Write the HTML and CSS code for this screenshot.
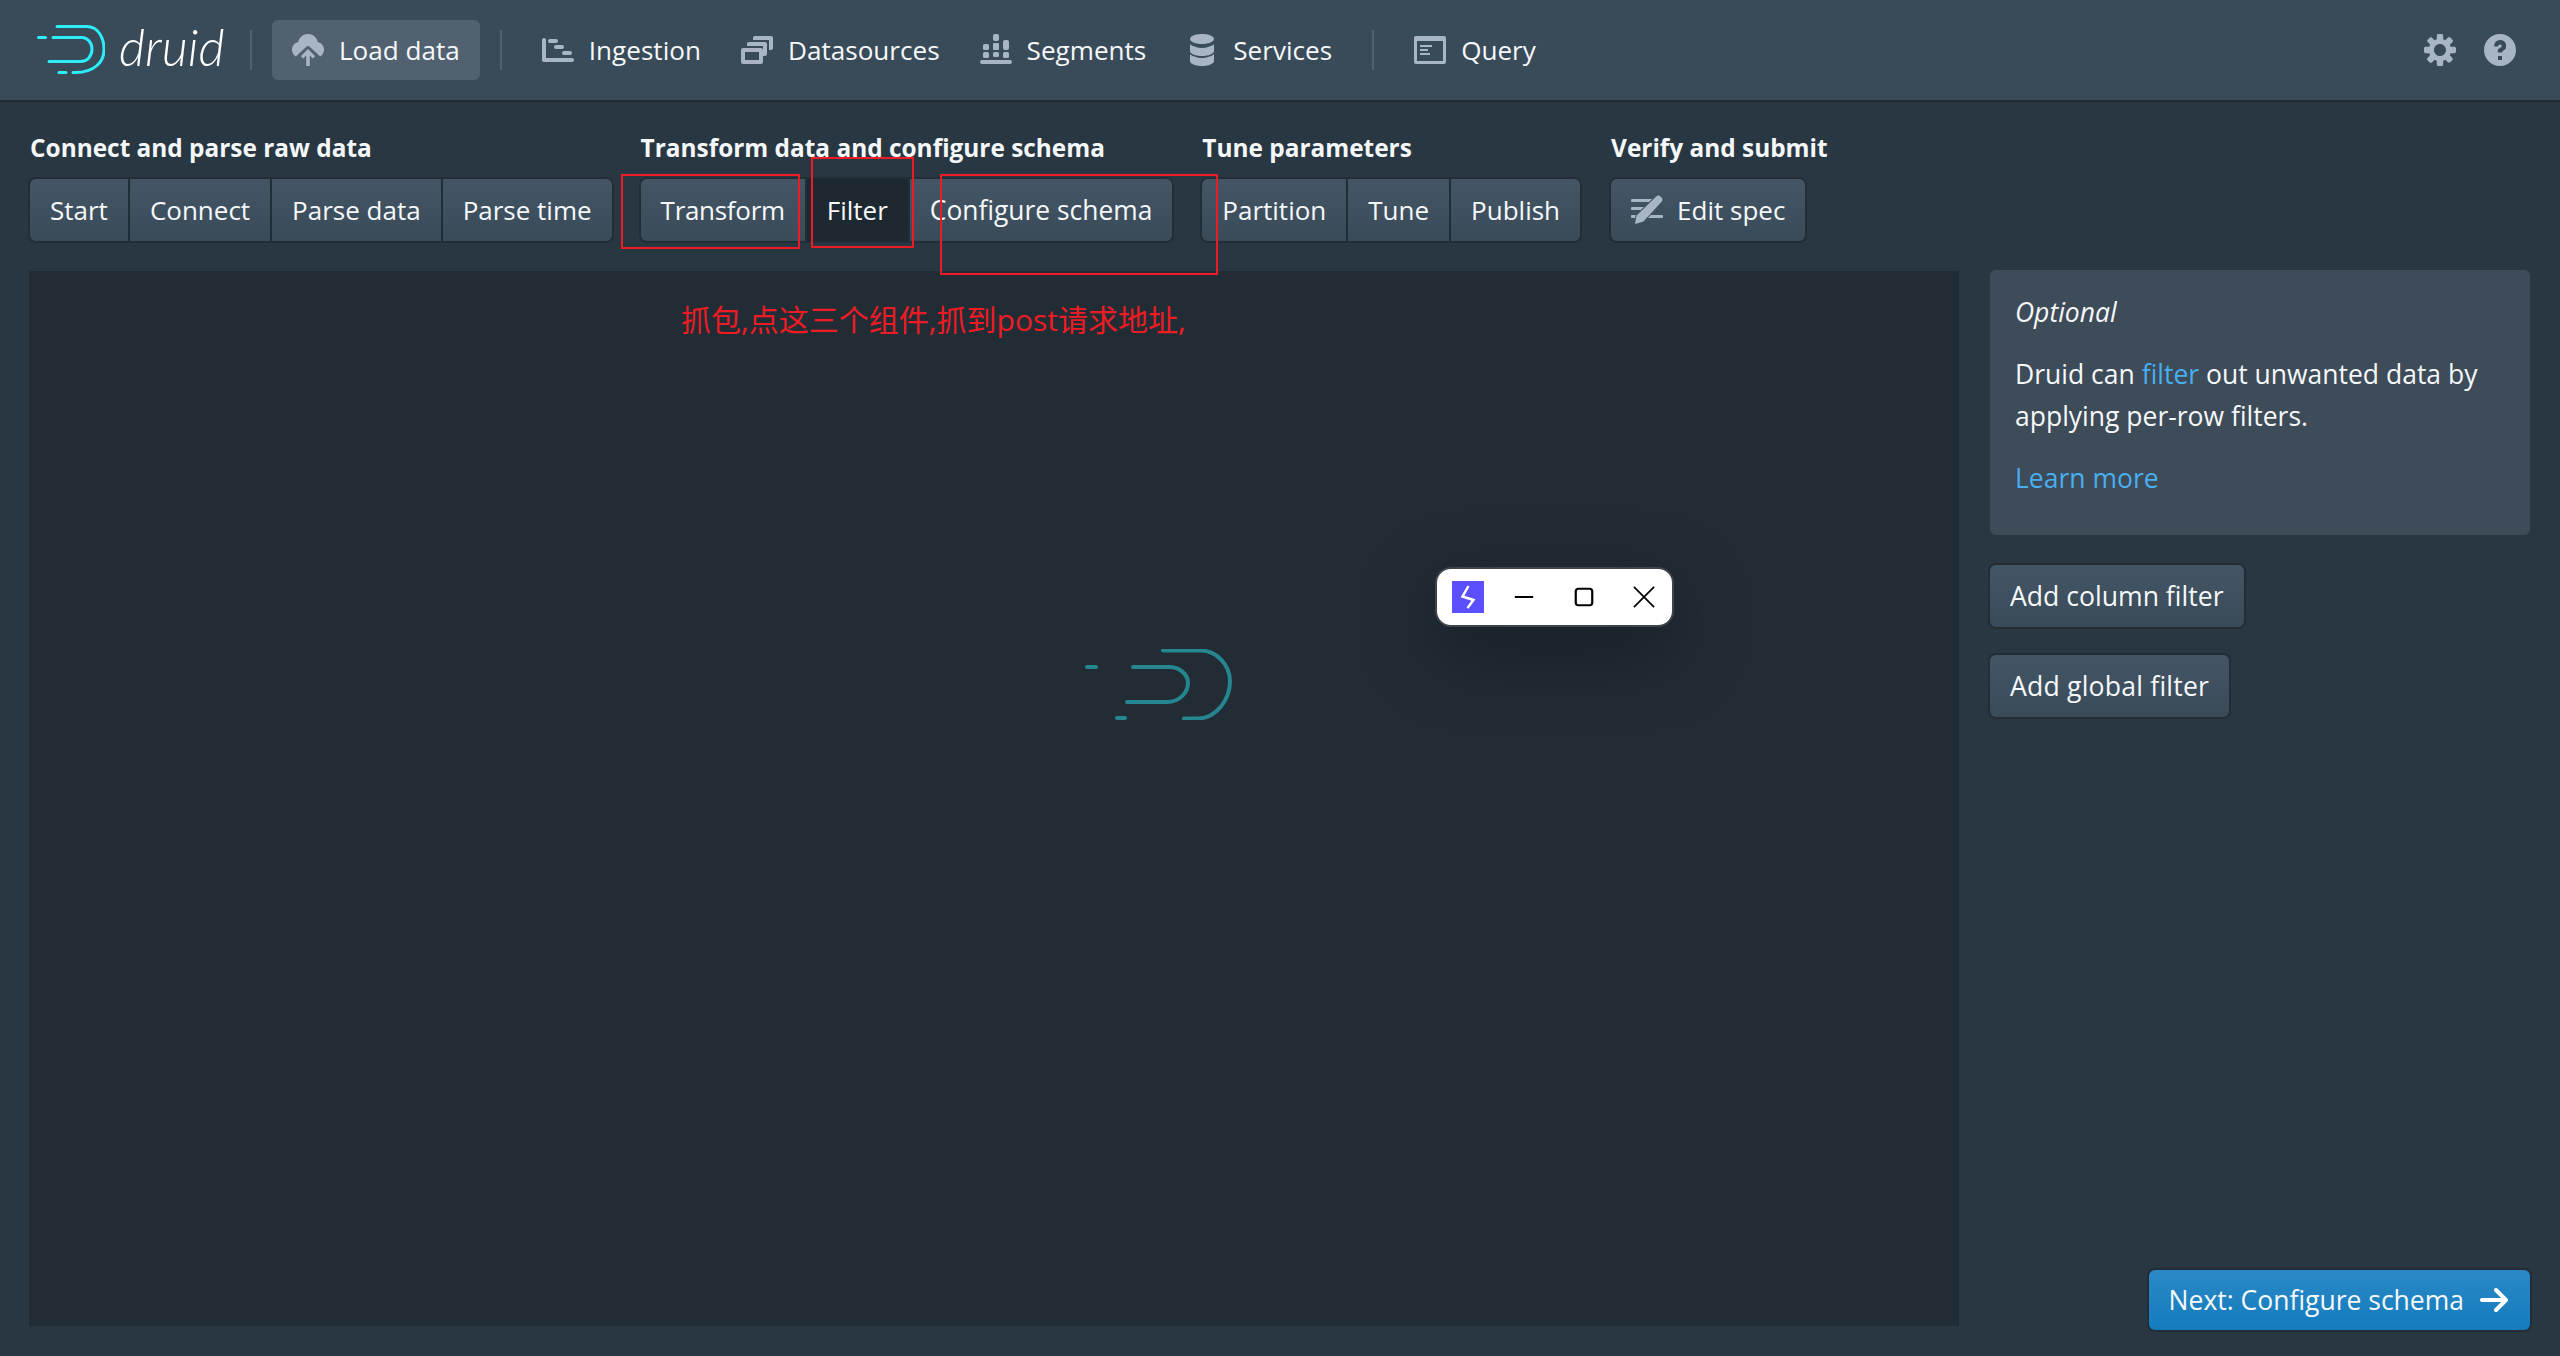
FILE: index.html

```html
<!DOCTYPE html>
<html lang="en">
<head>
  <meta charset="UTF-8" />
  <title>Apache Druid</title>
  <link rel="stylesheet" href="styles.css">
</head>
<body>
  <header class="navbar">
    <a class="brand">
      <svg class="brand-mark" viewBox="0 0 68 50" fill="none" stroke="#2ceefb" stroke-width="3" stroke-linecap="round">
        <path d="M1.5 12.5h7"/>
        <path d="M16 12.5h29c5 0 10 5 10 11.5s-4 12.500-12 12.500H12"/>
        <path d="M20 1.500h30c11 0 17 11 17 23s-9 23-29 23h-2"/>
        <path d="M22 47.500h7"/>
      </svg>
      <span class="brand-name">druid</span>
    </a>
    <span class="nav-divider"></span>
    <a class="nav-btn active">
      <svg class="icon" viewBox="0 0 16 16"><path d="M8 0C5.600 0 3.600 1.700 3.100 4 1.300 4.400 0 6 0 7.900c0 1.400.8 2.700 1.900 3.400l5.400-5c.4-.4 1-.4 1.400 0l5.400 5C15.200 10.600 16 9.300 16 7.900c0-1.900-1.300-3.500-3.100-3.900C12.400 1.700 10.400 0 8 0z"/><path d="M8 7.500l-3.600 3.600 1.200 1.200 1.500-1.500V16h1.800v-5.200l1.500 1.500 1.200-1.200z"/></svg>
      Load data
    </a>
    <span class="nav-divider"></span>
    <a class="nav-btn">
      <svg class="icon" viewBox="0 0 16 16"><path d="M0 3c0-.5.4-1 1-1s1 .5 1 1v9h13c.6 0 1 .4 1 1s-.4 1-1 1H1c-.6 0-1-.4-1-1z"/><rect x="3" y="2.500" width="5" height="2" rx="1"/><rect x="6" y="5.500" width="5" height="2" rx="1"/><rect x="10" y="8.500" width="5" height="2" rx="1"/></svg>
      Ingestion
    </a>
    <a class="nav-btn">
      <svg class="icon" viewBox="0 0 16 16"><path fill-rule="evenodd" d="M12 3.980H4c-.55 0-1 .45-1 1v1h8v5h1c.55 0 1-.45 1-1v-5c0-.55-.45-1-1-1zm3-3H7c-.55 0-1 .45-1 1v1h8v5h1c.55 0 1-.45 1-1v-5c0-.55-.45-1-1-1zm-5 6H1c-.55 0-1 .45-1 1v6c0 .55.45 1 1 1h9c.55 0 1-.45 1-1v-6c0-.55-.45-1-1-1zm-1 6H2v-4h7v4z"/></svg>
      Datasources
    </a>
    <a class="nav-btn">
      <svg class="icon" viewBox="0 0 16 16"><rect x="6.500" y="0" width="3" height="3.500" rx="1"/><rect x="1.500" y="5" width="3" height="3" rx=".8"/><rect x="6.500" y="4.500" width="3" height="3.500" rx=".5"/><rect x="11.500" y="3" width="3" height="5" rx="1"/><rect x="1.500" y="9" width="3" height="3" rx=".8"/><rect x="6.500" y="9" width="3" height="2.500" rx=".8"/><rect x="11.500" y="9" width="3" height="3" rx=".8"/><rect x="0" y="13" width="16" height="2" rx="1"/></svg>
      Segments
    </a>
    <a class="nav-btn">
      <svg class="icon" viewBox="0 0 16 16"><path d="M8 4.980c3.310 0 6-1.120 6-2.500s-2.690-2.500-6-2.500-6 1.120-6 2.500 2.690 2.500 6 2.500zm-6 .16v3.340c0 1.380 2.690 2.500 6 2.500s6-1.120 6-2.500V5.140c-1.400 1-3.600 1.840-6 1.840s-4.600-.84-6-1.840zm0 5v3.340c0 1.380 2.690 2.500 6 2.500s6-1.120 6-2.500v-3.340c-1.400 1-3.600 1.840-6 1.840s-4.600-.84-6-1.840z"/></svg>
      Services
    </a>
    <span class="nav-divider"></span>
    <a class="nav-btn">
      <svg class="icon" viewBox="0 0 16 16"><path fill-rule="evenodd" d="M15 1H1c-.6 0-1 .4-1 1v12c0 .6.4 1 1 1h14c.6 0 1-.4 1-1V2c0-.6-.4-1-1-1zm-.5 12.500h-13V3.500h13zM3 5.500h6v1H3zM3 7.500h4v1H3zM3 9.500h5v1H3z"/></svg>
      Query
    </a>
    <div class="nav-right">
      <svg class="icon" viewBox="0 0 16 16"><path d="M15.190 6.390h-1.850c-.11-.37-.27-.71-.45-1.040l1.360-1.360c.31-.31.31-.82 0-1.130l-1.130-1.130a.803.803 0 00-1.130 0l-1.360 1.360c-.33-.17-.67-.33-1.040-.44V.79c0-.44-.36-.8-.8-.8h-1.600c-.44 0-.8.36-.8.8v1.860c-.39.12-.75.28-1.100.47l-1.300-1.300c-.3-.3-.79-.3-1.090 0L1.820 2.910c-.3.3-.3.79 0 1.090l1.300 1.300c-.2.34-.36.7-.48 1.090H.79c-.44 0-.8.36-.8.8v1.600c0 .44.36.8.8.8h1.850c.11.37.27.71.45 1.040l-1.360 1.360c-.31.31-.31.82 0 1.130l1.130 1.130c.31.31.82.31 1.130 0l1.360-1.360c.33.18.67.33 1.040.44v1.860c0 .44.36.8.8.8h1.600c.44 0 .8-.36.8-.8v-1.860c.39-.12.75-.28 1.100-.47l1.300 1.300c.3.3.79.3 1.090 0l1.090-1.090c.3-.3.3-.79 0-1.090l-1.300-1.300c.19-.35.36-.71.48-1.100h1.850c.44 0 .8-.36.8-.8v-1.600a.816.816 0 00-.81-.79zm-7.200 4.600c-1.660 0-3-1.340-3-3s1.340-3 3-3 3 1.340 3 3-1.340 3-3 3z"/></svg>
      <svg class="icon" viewBox="0 0 16 16"><path fill-rule="evenodd" d="M8 0C3.580 0 0 3.580 0 8s3.580 8 8 8 8-3.580 8-8-3.580-8-8-8zm1 13H7v-2h2v2zm1.900-5.700c-.35.5-.85.8-1.350 1.050-.3.15-.4.25-.4.45v.45H6.850V8.600c0-.85.5-1.300 1.100-1.600.55-.25.9-.45.9-.95s-.35-.8-.85-.8c-.55 0-.9.35-.95.95H5.050C5.100 4.400 6.300 3 8 3c1.700 0 3 1.100 3 2.700 0 .55-.05 1.100-.1 1.600z"/></svg>
    </div>
  </header>

  <section class="steps">
    <div class="step-section">
      <div class="step-title">Connect and parse raw data</div>
      <div class="btn-group">
        <button class="btn">Start</button><button class="btn">Connect</button><button class="btn">Parse data</button><button class="btn">Parse time</button>
      </div>
    </div>
    <div class="step-section">
      <div class="step-title">Transform data and configure schema</div>
      <div class="btn-group">
        <button class="btn btn-narrow">Transform</button><button class="btn active">Filter</button><button class="btn btn-wide">Configure schema</button>
      </div>
    </div>
    <div class="step-section">
      <div class="step-title">Tune parameters</div>
      <div class="btn-group">
        <button class="btn">Partition</button><button class="btn">Tune</button><button class="btn">Publish</button>
      </div>
    </div>
    <div class="step-section">
      <div class="step-title">Verify and submit</div>
      <div class="btn-group">
        <button class="btn">
          <svg class="icon" viewBox="0 0 16 16">
            <rect x="0" y="2.500" width="11" height="1.500" rx=".5"/>
            <rect x="0" y="6.500" width="7" height="1.500" rx=".5"/>
            <rect x="0" y="10.500" width="3.500" height="1.500" rx=".5"/>
            <rect x="8" y="10.500" width="8" height="1.500" rx=".5"/>
            <path class="pencil" d="M2 15l.8-4.200L12.600 1.200c.6-.6 1.500-.6 2.100 0l.6.6c.6.6.6 1.500 0 2.100L6.200 13.700z"/>
          </svg>
          Edit spec
        </button>
      </div>
    </div>
  </section>

  <main class="content">
    <div class="main-panel">
      <svg class="loader" viewBox="0 0 148 71" fill="none" stroke="#26868f" stroke-width="4" stroke-linecap="round">
        <path d="M2 18h9"/>
        <path d="M48 18h36c10 0 19 7 19 16s-8 19-21 19H42"/>
        <path d="M80 2h38c15 0 29 14 29 31 0 18-14 37-32 37h-14" transform="translate(-2 -.5)"/>
        <path d="M32 69h8"/>
      </svg>
    </div>
    <aside class="side">
      <div class="callout">
        <p class="callout-title">Optional</p>
        <p>Druid can <a>filter</a> out unwanted data by applying per-row filters.</p>
        <p><a>Learn more</a></p>
      </div>
      <button class="btn solo">Add column filter</button>
      <button class="btn solo solo-global">Add global filter</button>
      <button class="btn next">Next: Configure schema
        <svg class="icon" viewBox="0 0 16 16"><path d="M14.700 7.290l-5-5a.965.965 0 00-.71-.3 1.003 1.003 0 00-.71 1.710l3.290 3.290H1.990c-.55 0-1 .45-1 1s.45 1 1 1h9.590l-3.290 3.290a1.003 1.003 0 001.420 1.420l5-5c.18-.18.29-.43.29-.71 0-.28-.12-.52-.3-.7z"/></svg>
      </button>
    </aside>
  </main>

  <!-- annotations from the screenshot -->
  <div class="mark mark-transform"></div>
  <div class="mark mark-filter"></div>
  <div class="mark mark-schema"></div>
  <div class="mark-note">抓包,点这三个组件,抓到post请求地址,</div>

  <div class="float-bar">
    <span class="float-logo">
      <svg viewBox="0 0 32 32" fill="none" stroke="#fff" stroke-width="2.500"><path d="M16.500 5l-6 10.500 11 3.500-6 8"/></svg>
    </span>
    <svg class="float-icon" viewBox="0 0 24 24" fill="none" stroke="#000" stroke-width="2.200"><path d="M2 12h20"/></svg>
    <svg class="float-icon" viewBox="0 0 24 24" fill="none" stroke="#000" stroke-width="2.400"><rect x="3" y="3" width="18" height="18" rx="3"/></svg>
    <svg class="float-icon" viewBox="0 0 24 24" fill="none" stroke="#000" stroke-width="1.800"><path d="M1 1l22 22M23 1L1 23"/></svg>
  </div>
</body>
</html>
```

FILE: styles.css

```css
html, body {
  height: 100%;
}
body {
  margin: 0;
  height: 1356px;
  overflow: hidden;
  display: flex;
  flex-direction: column;
  position: relative;
  background-color: #293742;
  color: #f5f8fa;
  font-family: "Open Sans", "Noto Sans CJK SC", sans-serif;
  font-size: 26.100px;
}
a {
  color: #48aff0;
}
button {
  font-family: inherit;
}
.icon {
  width: 32px;
  height: 32px;
  fill: #a7b6c2;
  flex: none;
}

/* top bar */
.navbar {
  display: flex;
  align-items: center;
  height: 100px;
  flex: none;
  padding: 0 44px 0 37px;
  background-color: #394b59;
  box-shadow: 0 2px 0 #1f2a32;
}
.brand {
  display: flex;
  align-items: center;
  margin-right: 0;
  width: 193px;
}
.brand-mark {
  width: 68px;
  height: 50px;
  margin-right: 14px;
}
.brand-name {
  font-family: Lato, sans-serif;
  font-size: 50.500px;
  font-style: italic;
  font-weight: 300;
  line-height: 1;
  color: #fff;
  margin-bottom: 6px;
}
.nav-divider {
  width: 2px;
  height: 40px;
  margin: 0 20px;
  background-color: #52616e;
}
.nav-btn {
  display: flex;
  align-items: center;
  gap: 15px;
  height: 60px;
  padding: 0 20px;
  border-radius: 6px;
  color: #f5f8fa;
}
.nav-btn.active {
  background-color: #526170;
}
.nav-right {
  margin-left: auto;
  display: flex;
  gap: 28px;
}

/* wizard steps */
.steps {
  display: flex;
  gap: 29px;
  padding: 29px 0 0 30px;
  height: 170px;
  flex: none;
  box-sizing: border-box;
}
.step-section:nth-child(2) {
  margin-right: 1px;
}
.step-section:last-child {
  margin-left: 2px;
}
.step-title {
  font-weight: 700;
  font-size: 24.400px;
  line-height: 38px;
  margin-bottom: 12px;
  white-space: nowrap;
}
.btn-group {
  display: inline-flex;
  border-radius: 6px;
  box-shadow: 0 0 0 2px #222d36;
}
.btn {
  height: 62px;
  padding: 0 20px;
  border: 0;
  border-left: 2px solid #222d36;
  background: linear-gradient(#445665, #394b59);
  color: #f5f8fa;
  font-size: 26px;
  display: flex;
  align-items: center;
  gap: 14px;
}
.btn-narrow {
  letter-spacing: -.3px;
}
.btn-wide {
  font-size: 26.400px;
}
.btn-group .btn:first-child {
  border-left: 0;
  border-radius: 6px 0 0 6px;
}
.btn-group .btn:last-child {
  border-radius: 0 6px 6px 0;
}
.btn-group .btn:only-child {
  border-radius: 6px;
}
.btn.active {
  background: #1e2830;
}
.pencil {
  stroke: #3f5160;
  stroke-width: 1;
  paint-order: stroke;
}

/* body */
.content {
  flex: 1;
  display: flex;
  gap: 31px;
  padding: 0 30px 26px 29px;
  min-height: 0;
}
.main-panel {
  width: 1930px;
  margin: 1px 0 4px;
  background-color: #212c35;
}
.loader {
  display: block;
  width: 148px;
  height: 71px;
  margin: 378px 0 0 1056px;
}
.side {
  flex: 1;
  display: flex;
  flex-direction: column;
  align-items: flex-start;
}
.callout {
  align-self: stretch;
  background-color: #3e4b58;
  border-radius: 6px;
  padding: 21px 25px 13px;
  height: 265px;
  box-sizing: border-box;
  font-size: 26.500px;
  line-height: 42px;
  margin-bottom: 30px;
}
.callout p {
  margin: 0 0 20px;
}
.callout-title {
  font-style: italic;
}
.solo {
  font-size: 26.600px;
  border: 0;
  border-radius: 6px;
  box-shadow: 0 0 0 2px #222d36;
  margin-bottom: 28px;
}
.solo-global {
  letter-spacing: .2px;
}
.next {
  font-size: 26.500px;
  margin-top: auto;
  align-self: flex-end;
  height: 60px;
  border: 0;
  border-radius: 6px;
  background: linear-gradient(#2b88c6, #137cbd);
  box-shadow: 0 0 0 2px #222d36;
}
.next .icon {
  fill: #fff;
}

/* red boxes and note drawn over the screenshot */
.mark {
  position: absolute;
  border: 2px solid #ed1c24;
  box-sizing: border-box;
}
.mark-transform {
  left: 621px;
  top: 174px;
  width: 179px;
  height: 75px;
}
.mark-filter {
  left: 811px;
  top: 157px;
  width: 103px;
  height: 91px;
}
.mark-schema {
  left: 940px;
  top: 174px;
  width: 278px;
  height: 101px;
}
.mark-note {
  position: absolute;
  left: 681px;
  top: 298px;
  font-size: 30px;
  line-height: 44px;
  color: #ed1c24;
}

/* floating window controls */
.float-bar {
  position: absolute;
  left: 1435px;
  top: 567px;
  width: 239px;
  height: 60px;
  box-sizing: border-box;
  padding: 0 0 0 15px;
  display: flex;
  align-items: center;
  gap: 38px;
  background-color: #fff;
  border: 2px solid #3e444a;
  border-radius: 16px;
  box-shadow: 0 24px 80px rgba(0, 0, 0, .35);
}
.float-logo {
  width: 32px;
  height: 32px;
  margin-right: -9px;
  background-color: #5b4fff;
  display: block;
}
.float-icon {
  width: 22px;
  height: 22px;
}
```
